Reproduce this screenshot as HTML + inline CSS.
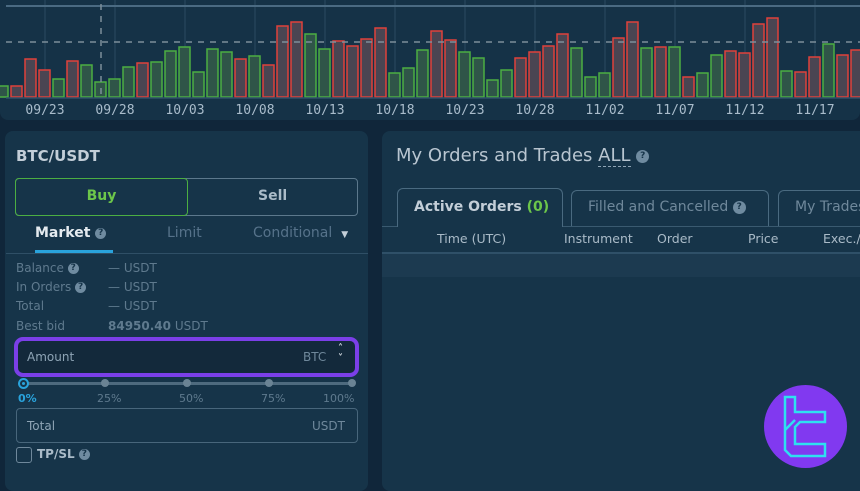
<!DOCTYPE html>
<html><head><meta charset="utf-8"><style>
*{margin:0;padding:0;box-sizing:border-box}
body{width:860px;height:484px;overflow:hidden;background:#10263a;font-family:"DejaVu Sans","Liberation Sans",sans-serif;position:relative}
.chart{position:absolute;left:0;top:0;width:860px;height:120px;background:#153247;border-radius:0 0 8px 8px}
.p{position:absolute;background:#163449;border-radius:8px}
.t{position:absolute;white-space:nowrap}
.q{display:inline-block;width:11px;height:11px;border-radius:50%;background:#6f8ba0;color:#163449;font-size:9px;font-weight:bold;text-align:center;line-height:11px;vertical-align:middle}
.lab{color:#5f7a8e;font-size:12px}
.val{color:#5f7a8e;font-size:12px}
</style></head><body>
<div class="chart">
<svg width="860" height="120" style="position:absolute;left:0;top:0">
<g stroke="#2a4a60" stroke-width="1">
<line x1="45" y1="0" x2="45" y2="97"/><line x1="115" y1="0" x2="115" y2="97"/><line x1="185" y1="0" x2="185" y2="97"/><line x1="255" y1="0" x2="255" y2="97"/><line x1="325" y1="0" x2="325" y2="97"/><line x1="395" y1="0" x2="395" y2="97"/><line x1="465" y1="0" x2="465" y2="97"/><line x1="535" y1="0" x2="535" y2="97"/><line x1="605" y1="0" x2="605" y2="97"/><line x1="675" y1="0" x2="675" y2="97"/><line x1="745" y1="0" x2="745" y2="97"/><line x1="815" y1="0" x2="815" y2="97"/>
</g>
<line x1="6" y1="6" x2="860" y2="6" stroke="#4a6a82" stroke-width="2"/>
<g stroke-width="1.5">
<rect x="-3" y="86" width="11" height="11" fill="#2f5548" stroke="#4cae42"/>
<rect x="11" y="86" width="11" height="11" fill="#4a4552" stroke="#e0413b"/>
<rect x="25" y="59" width="11" height="38" fill="#4a4552" stroke="#e0413b"/>
<rect x="39" y="70" width="11" height="27" fill="#4a4552" stroke="#e0413b"/>
<rect x="53" y="79" width="11" height="18" fill="#2f5548" stroke="#4cae42"/>
<rect x="67" y="61" width="11" height="36" fill="#4a4552" stroke="#e0413b"/>
<rect x="81" y="65" width="11" height="32" fill="#2f5548" stroke="#4cae42"/>
<rect x="95" y="82" width="11" height="15" fill="#2f5548" stroke="#4cae42"/>
<rect x="109" y="79" width="11" height="18" fill="#2f5548" stroke="#4cae42"/>
<rect x="123" y="67" width="11" height="30" fill="#2f5548" stroke="#4cae42"/>
<rect x="137" y="63" width="11" height="34" fill="#4a4552" stroke="#e0413b"/>
<rect x="151" y="62" width="11" height="35" fill="#2f5548" stroke="#4cae42"/>
<rect x="165" y="51" width="11" height="46" fill="#2f5548" stroke="#4cae42"/>
<rect x="179" y="47" width="11" height="50" fill="#2f5548" stroke="#4cae42"/>
<rect x="193" y="72" width="11" height="25" fill="#2f5548" stroke="#4cae42"/>
<rect x="207" y="49" width="11" height="48" fill="#2f5548" stroke="#4cae42"/>
<rect x="221" y="52" width="11" height="45" fill="#2f5548" stroke="#4cae42"/>
<rect x="235" y="59" width="11" height="38" fill="#4a4552" stroke="#e0413b"/>
<rect x="249" y="56" width="11" height="41" fill="#2f5548" stroke="#4cae42"/>
<rect x="263" y="65" width="11" height="32" fill="#4a4552" stroke="#e0413b"/>
<rect x="277" y="26" width="11" height="71" fill="#4a4552" stroke="#e0413b"/>
<rect x="291" y="22" width="11" height="75" fill="#4a4552" stroke="#e0413b"/>
<rect x="305" y="34" width="11" height="63" fill="#2f5548" stroke="#4cae42"/>
<rect x="319" y="49" width="11" height="48" fill="#2f5548" stroke="#4cae42"/>
<rect x="333" y="41" width="11" height="56" fill="#4a4552" stroke="#e0413b"/>
<rect x="347" y="46" width="11" height="51" fill="#4a4552" stroke="#e0413b"/>
<rect x="361" y="39" width="11" height="58" fill="#4a4552" stroke="#e0413b"/>
<rect x="375" y="28" width="11" height="69" fill="#4a4552" stroke="#e0413b"/>
<rect x="389" y="73" width="11" height="24" fill="#2f5548" stroke="#4cae42"/>
<rect x="403" y="68" width="11" height="29" fill="#2f5548" stroke="#4cae42"/>
<rect x="417" y="50" width="11" height="47" fill="#2f5548" stroke="#4cae42"/>
<rect x="431" y="31" width="11" height="66" fill="#4a4552" stroke="#e0413b"/>
<rect x="445" y="40" width="11" height="57" fill="#4a4552" stroke="#e0413b"/>
<rect x="459" y="52" width="11" height="45" fill="#2f5548" stroke="#4cae42"/>
<rect x="473" y="58" width="11" height="39" fill="#2f5548" stroke="#4cae42"/>
<rect x="487" y="80" width="11" height="17" fill="#2f5548" stroke="#4cae42"/>
<rect x="501" y="70" width="11" height="27" fill="#2f5548" stroke="#4cae42"/>
<rect x="515" y="58" width="11" height="39" fill="#4a4552" stroke="#e0413b"/>
<rect x="529" y="52" width="11" height="45" fill="#4a4552" stroke="#e0413b"/>
<rect x="543" y="46" width="11" height="51" fill="#4a4552" stroke="#e0413b"/>
<rect x="557" y="34" width="11" height="63" fill="#4a4552" stroke="#e0413b"/>
<rect x="571" y="48" width="11" height="49" fill="#2f5548" stroke="#4cae42"/>
<rect x="585" y="77" width="11" height="20" fill="#2f5548" stroke="#4cae42"/>
<rect x="599" y="73" width="11" height="24" fill="#2f5548" stroke="#4cae42"/>
<rect x="613" y="38" width="11" height="59" fill="#4a4552" stroke="#e0413b"/>
<rect x="627" y="22" width="11" height="75" fill="#4a4552" stroke="#e0413b"/>
<rect x="641" y="48" width="11" height="49" fill="#2f5548" stroke="#4cae42"/>
<rect x="655" y="47" width="11" height="50" fill="#4a4552" stroke="#e0413b"/>
<rect x="669" y="47" width="11" height="50" fill="#2f5548" stroke="#4cae42"/>
<rect x="683" y="77" width="11" height="20" fill="#4a4552" stroke="#e0413b"/>
<rect x="697" y="73" width="11" height="24" fill="#2f5548" stroke="#4cae42"/>
<rect x="711" y="55" width="11" height="42" fill="#2f5548" stroke="#4cae42"/>
<rect x="725" y="51" width="11" height="46" fill="#4a4552" stroke="#e0413b"/>
<rect x="739" y="53" width="11" height="44" fill="#4a4552" stroke="#e0413b"/>
<rect x="753" y="24" width="11" height="73" fill="#4a4552" stroke="#e0413b"/>
<rect x="767" y="18" width="11" height="79" fill="#4a4552" stroke="#e0413b"/>
<rect x="781" y="71" width="11" height="26" fill="#2f5548" stroke="#4cae42"/>
<rect x="795" y="72" width="11" height="25" fill="#4a4552" stroke="#e0413b"/>
<rect x="809" y="57" width="11" height="40" fill="#4a4552" stroke="#e0413b"/>
<rect x="823" y="44" width="11" height="53" fill="#2f5548" stroke="#4cae42"/>
<rect x="837" y="55" width="11" height="42" fill="#4a4552" stroke="#e0413b"/>
<rect x="851" y="50" width="11" height="47" fill="#4a4552" stroke="#e0413b"/>
</g>
<line x1="6" y1="42" x2="860" y2="42" stroke="#7d8e9a" stroke-width="1.5" stroke-dasharray="6,6"/>
<line x1="101" y1="4" x2="101" y2="97" stroke="#7d8e9a" stroke-width="1.5" stroke-dasharray="6,6"/>
<line x1="6" y1="98" x2="860" y2="98" stroke="#2f5068" stroke-width="1.5"/>
<g fill="#a9bccb" font-family="DejaVu Sans Mono,Liberation Mono,monospace" font-size="13" text-anchor="middle">
<text x="45" y="114">09/23</text><text x="115" y="114">09/28</text><text x="185" y="114">10/03</text><text x="255" y="114">10/08</text><text x="325" y="114">10/13</text><text x="395" y="114">10/18</text><text x="465" y="114">10/23</text><text x="535" y="114">10/28</text><text x="605" y="114">11/02</text><text x="675" y="114">11/07</text><text x="745" y="114">11/12</text><text x="815" y="114">11/17</text>
</g>
</svg>
</div>

<div class="p" style="left:5px;top:131px;width:363px;height:360px">
<div class="t" style="left:11px;top:16px;color:#c3ced8;font-size:15px;font-weight:bold">BTC/USDT</div>
<div style="position:absolute;left:10px;top:47px;width:343px;height:38px;border:1.5px solid #5c788c;border-radius:4px"></div>
<div style="position:absolute;left:10px;top:47px;width:173px;height:38px;border:1.5px solid #4cae42;border-radius:4px;color:#6cc64a;font-weight:bold;font-size:14px;text-align:center;line-height:35px">Buy</div>
<div class="t" style="left:253px;top:57px;color:#aabbc8;font-size:14px;font-weight:bold">Sell</div>
<div class="t" style="left:30px;top:94px;color:#e4eaef;font-size:14px;font-weight:bold">Market <span class="q">?</span></div>
<div style="position:absolute;left:30px;top:119px;width:78px;height:3px;background:#29a3dc"></div>
<div style="position:absolute;left:1px;top:122px;width:362px;height:1px;background:#2f4f66"></div>
<div class="t" style="left:162px;top:94px;color:#56728a;font-size:14px">Limit</div>
<div class="t" style="left:248px;top:94px;color:#56728a;font-size:14px">Conditional &nbsp;<span style="font-size:9px;color:#c3ced8">▼</span></div>
<div class="t lab" style="left:11px;top:130px">Balance <span class="q">?</span></div>
<div class="t lab" style="left:11px;top:149px">In Orders <span class="q">?</span></div>
<div class="t lab" style="left:11px;top:168px">Total</div>
<div class="t lab" style="left:11px;top:188px">Best bid</div>
<div class="t val" style="left:103px;top:130px">— USDT</div>
<div class="t val" style="left:103px;top:149px">— USDT</div>
<div class="t val" style="left:103px;top:168px">— USDT</div>
<div class="t val" style="left:103px;top:188px"><b>84950.40</b> USDT</div>
<div style="position:absolute;left:9px;top:206px;width:345px;height:40px;border:4px solid #7b3fe8;border-radius:9px;background:#13293b"></div>
<div class="t" style="left:22px;top:219px;color:#8ea4b5;font-size:12px">Amount</div>
<div class="t" style="left:298px;top:219px;color:#6f889b;font-size:12px">BTC</div>
<div class="t" style="left:333px;top:213px;color:#dfe6ec;font-size:10px;line-height:10px;font-weight:bold">˄<br>˅</div>
<div style="position:absolute;left:22px;top:251px;width:326px;height:3px;background:#4e6a7e"></div>
<div style="position:absolute;left:13px;top:247px;width:11px;height:11px;border-radius:50%;border:2px solid #29a3dc;background:#163449"><div style="width:3px;height:3px;margin:2px;background:#29a3dc;border-radius:50%"></div></div>
<div style="position:absolute;left:96px;top:248px;width:8px;height:8px;border-radius:50%;background:#6a8394"></div>
<div style="position:absolute;left:178px;top:248px;width:8px;height:8px;border-radius:50%;background:#6a8394"></div>
<div style="position:absolute;left:260px;top:248px;width:8px;height:8px;border-radius:50%;background:#6a8394"></div>
<div style="position:absolute;left:343px;top:248px;width:8px;height:8px;border-radius:50%;background:#6a8394"></div>
<div class="t" style="left:13px;top:261px;color:#29a3dc;font-size:11px;font-weight:bold">0%</div>
<div class="t" style="left:92px;top:261px;color:#5f7a8e;font-size:11px">25%</div>
<div class="t" style="left:174px;top:261px;color:#5f7a8e;font-size:11px">50%</div>
<div class="t" style="left:256px;top:261px;color:#5f7a8e;font-size:11px">75%</div>
<div class="t" style="left:318px;top:261px;color:#5f7a8e;font-size:11px">100%</div>
<div style="position:absolute;left:11px;top:277px;width:342px;height:35px;border:1px solid #48667b;border-radius:4px"></div>
<div class="t" style="left:22px;top:288px;color:#8ea4b5;font-size:12px">Total</div>
<div class="t" style="left:307px;top:288px;color:#6f889b;font-size:12px">USDT</div>
<div style="position:absolute;left:11px;top:316px;width:16px;height:16px;border:1.5px solid #6f889b;border-radius:3px"></div>
<div class="t" style="left:32px;top:316px;color:#aabbc8;font-size:12px;font-weight:bold">TP/SL <span class="q">?</span></div>
</div>

<div class="p" style="left:382px;top:131px;width:490px;height:360px">
<div class="t" style="left:14px;top:14px;color:#b8c5d0;font-size:18px">My Orders and Trades <span style="border-bottom:1.5px dashed #8ea4b5">ALL</span> <span class="q" style="width:13px;height:13px;line-height:13px">?</span></div>
<div style="position:absolute;left:0;top:95px;width:490px;height:1px;background:#3a5a70"></div>
<div style="position:absolute;left:15px;top:57px;width:166px;height:39px;border:1px solid #4a6a80;border-bottom:none;border-radius:6px 6px 0 0;background:#163449"></div>
<div class="t" style="left:32px;top:68px;color:#c3ced8;font-size:14px;font-weight:bold">Active Orders <span style="color:#6cc64a">(0)</span></div>
<div style="position:absolute;left:189px;top:59px;width:198px;height:36px;border:1px solid #4a6a80;border-bottom:none;border-radius:6px 6px 0 0"></div>
<div class="t" style="left:206px;top:68px;color:#6f889b;font-size:14px">Filled and Cancelled <span class="q" style="width:13px;height:13px;line-height:13px">?</span></div>
<div style="position:absolute;left:396px;top:59px;width:100px;height:36px;border:1px solid #4a6a80;border-bottom:none;border-radius:6px 6px 0 0"></div>
<div class="t" style="left:413px;top:68px;color:#6f889b;font-size:14px">My Trades</div>
<div class="t" style="left:55px;top:100px;color:#aabbc8;font-size:12.5px">Time (UTC)</div>
<div class="t" style="left:182px;top:100px;color:#aabbc8;font-size:12.5px">Instrument</div>
<div class="t" style="left:275px;top:100px;color:#aabbc8;font-size:12.5px">Order</div>
<div class="t" style="left:366px;top:100px;color:#aabbc8;font-size:12.5px">Price</div>
<div class="t" style="left:441px;top:100px;color:#aabbc8;font-size:12.5px">Exec./</div>
<div style="position:absolute;left:0;top:121px;width:490px;height:2px;background:#2f5068"></div>
<div style="position:absolute;left:0;top:123px;width:490px;height:23px;background:#1c3a50"></div>
</div>

<div style="position:absolute;left:764px;top:385px;width:83px;height:83px;border-radius:50%;background:#8139f0">
<svg width="83" height="83" viewBox="0 0 83 83" style="position:absolute;left:0;top:0" fill="none" stroke="#2ee0f0" stroke-width="2.5" stroke-linejoin="miter">
<path d="M21 12 H31 V27 H61 V37 H36 L31 42 V59 H61 V71 H27 L21 65 Z"/>
<path d="M21 45 L31 35"/>
</svg>
</div>
</body></html>
